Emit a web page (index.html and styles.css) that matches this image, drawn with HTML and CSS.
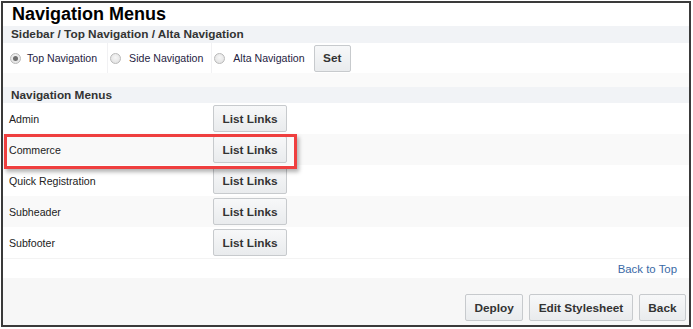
FILE: index.html
```html
<!DOCTYPE html>
<html>
<head>
<meta charset="utf-8">
<link rel="stylesheet" href="styles.css">
</head>
<body>
<div class="frame">
  <h1 class="title">Navigation Menus</h1>
  <div class="band band-first">Sidebar / Top Navigation / Alta Navigation</div>
  <div class="radio-row">
    <label class="opt opt-first"><input type="radio" name="nav" checked><span>Top Navigation</span></label>
    <label class="opt"><input type="radio" name="nav"><span>Side Navigation</span></label>
    <label class="opt opt-last"><input type="radio" name="nav"><span>Alta Navigation</span></label>
    <button class="btn btn-set">Set</button>
  </div>
  <div class="spacer"></div>
  <div class="band band-menus">Navigation Menus</div>
  <div class="menus">
    <div class="menu-row"><span class="menu-name">Admin</span><button class="btn">List Links</button></div>
    <div class="menu-row alt"><span class="menu-name">Commerce</span><button class="btn">List Links</button></div>
    <div class="menu-row"><span class="menu-name">Quick Registration</span><button class="btn">List Links</button></div>
    <div class="menu-row alt"><span class="menu-name">Subheader</span><button class="btn">List Links</button></div>
    <div class="menu-row"><span class="menu-name">Subfooter</span><button class="btn">List Links</button></div>
  </div>
  <div class="top-row"><a class="top-link" href="#">Back to Top</a></div>
  <div class="footer">
    <button class="btn">Deploy</button>
    <button class="btn">Edit Stylesheet</button>
    <button class="btn">Back</button>
  </div>
  <div class="highlight"></div>
</div>
</body>
</html>
```
FILE: styles.css
```css
html, body {
  margin: 0;
  padding: 0;
  background: #ffffff;
}

body {
  font-family: "Liberation Sans", Arial, sans-serif;
  color: #222;
}

.frame {
  position: relative;
  box-sizing: border-box;
  margin: 1px 0 0 1px;
  width: 690px;
  height: 326px;
  border: 2px solid #3a3a3a;
  display: flex;
  flex-direction: column;
  background: #fff;
}

.title {
  margin: 0;
  height: 23px;
  line-height: 23px;
  padding-left: 9px;
  font-size: 18px;
  font-weight: bold;
  color: #000;
}

.band {
  background: #f1f3f6;
  font-size: 11.8px;
  font-weight: bold;
  color: #333;
  padding-left: 8px;
}

.band-first {
  height: 17px;
  line-height: 17px;
}

.radio-row {
  height: 30px;
  display: flex;
  align-items: center;
}

.opt {
  height: 30px;
  display: flex;
  align-items: center;
  gap: 8px;
  padding: 0 8px 0 2px;
  font-size: 10.6px;
  color: #26233f;
  border-right: 1px solid #f1f1f3;
}

.opt-first {
  padding-left: 7px;
  padding-right: 10px;
  gap: 6px;
}

.opt-last {
  border-right: none;
  padding-right: 9px;
}

.opt input {
  appearance: none;
  -webkit-appearance: none;
  margin: 0;
  width: 11px;
  height: 11px;
  border-radius: 50%;
  border: 1px solid #b9b9b9;
  background: radial-gradient(circle at 50% 40%, #f6f6f6 0%, #dedede 100%);
  box-sizing: border-box;
  position: relative;
}

.opt input:checked::after {
  content: "";
  position: absolute;
  left: 2px;
  top: 2px;
  width: 5px;
  height: 5px;
  border-radius: 50%;
  background: #6f6f6f;
}

.btn {
  box-sizing: border-box;
  height: 27px;
  padding: 0 8.5px;
  border: 1px solid #c7cacd;
  border-radius: 2px;
  background: linear-gradient(#f7f8f9, #e9ebed);
  font-family: "Liberation Sans", Arial, sans-serif;
  font-size: 11.8px;
  font-weight: bold;
  color: #333;
  cursor: pointer;
}

.spacer {
  height: 14px;
  background: #fafafa;
}

.band-menus {
  height: 16px;
  line-height: 16px;
}

.menus {
  display: flex;
  flex-direction: column;
}

.menu-row {
  height: 31px;
  display: grid;
  grid-template-columns: 204px auto;
  align-items: center;
  justify-items: start;
  padding-left: 6px;
  box-sizing: border-box;
  background: #fff;
}

.menu-row.alt {
  background: #f9f9f9;
}

.menu-name {
  font-size: 10.6px;
  color: #222;
}

.top-row {
  height: 20px;
  box-sizing: border-box;
  border-top: 1px solid #f3f3f3;
  display: flex;
  justify-content: flex-end;
  align-items: center;
  padding-right: 12px;
}

.top-link {
  font-size: 11.4px;
  color: #3a6aa6;
  text-decoration: none;
}

.footer {
  flex: 1;
  background: #f7f7f7;
  display: flex;
  justify-content: flex-end;
  align-items: flex-end;
  gap: 6px;
  padding: 0 3px 4px 0;
}

.highlight {
  position: absolute;
  left: 1px;
  top: 131px;
  width: 293px;
  height: 35px;
  box-sizing: border-box;
  border: 3px solid #ef3f3f;
  box-shadow: 2px 3px 4px rgba(0, 0, 0, 0.3);
  pointer-events: none;
}
```
